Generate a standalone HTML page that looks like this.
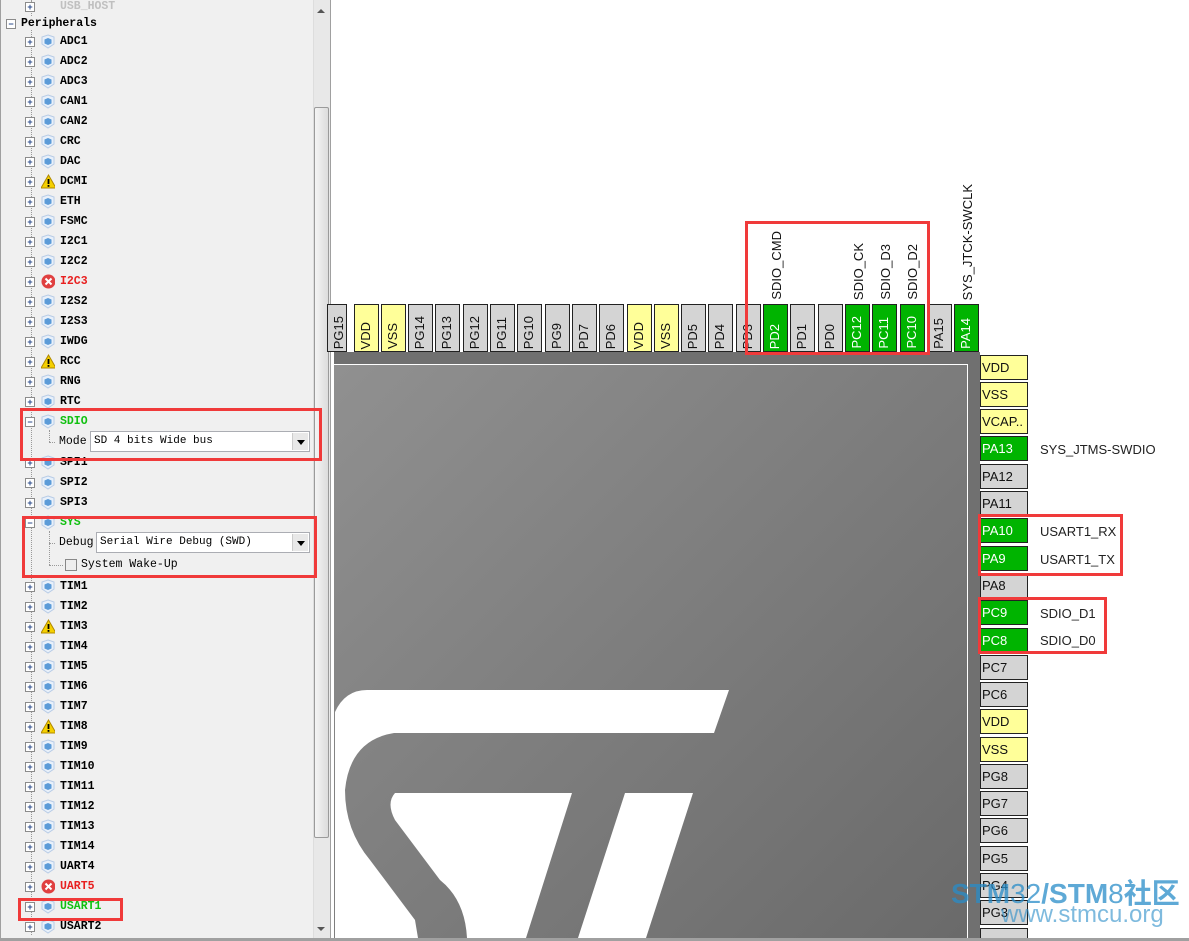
<!DOCTYPE html>
<html><head><meta charset="utf-8"><style>
*{margin:0;padding:0;box-sizing:border-box}
html,body{width:1189px;height:941px;overflow:hidden}
body{position:relative;background:#fff;font-family:"Liberation Sans",sans-serif}
#left{position:absolute;left:0;top:0;width:331px;height:941px;background:#f0f0f0;border-right:1px solid #a0a0a0;border-left:1px solid #a0a0a0}
.r{position:absolute;height:18px;font:bold 11.5px "Liberation Mono","Noto Sans CJK SC",monospace;line-height:18px;color:#000;white-space:nowrap}
.bx{position:absolute;width:10px;height:10px;border:1px solid #8b8b8b;background:#fff;font:bold 9px/8px "Liberation Sans",sans-serif;color:#2a4a8a;text-align:center}
.ic{position:absolute;width:14px;height:15px}
.vl{position:absolute;border-left:1px dotted #999;width:0}
.hl{position:absolute;border-top:1px dotted #999;height:0;width:6px}
.sel{position:absolute;height:21px;border:1px solid #abadb3;background:#fff;font:11px/19px "Liberation Mono",monospace;padding-left:3px;color:#000;white-space:nowrap}
.sel i{position:absolute;right:1px;top:1px;width:16px;height:17px;background:#e8e8e8;border-left:1px solid #ccc}
.sel i:after{content:"";position:absolute;left:4px;top:7px;border:4px solid transparent;border-top:5px solid #000}
.red{position:absolute;border:3px solid #f03a3a}
.tp{position:absolute;top:304px;width:25px;height:48px;border:1px solid #222;background:#d4d4d4;font-size:13px;color:#111}
.tp span{position:absolute;left:3px;bottom:2px;writing-mode:vertical-rl;transform:rotate(180deg)}
.rp{position:absolute;left:980px;width:48px;height:25px;border:1px solid #222;background:#d4d4d4;font-size:13px;line-height:23px;padding-left:1px;color:#111}
.y{background:#ffff99}.g{background:#00b400;color:#fff}
.lab{position:absolute;font-size:13px;color:#222}
.vt{position:absolute;writing-mode:vertical-rl;transform:rotate(180deg);font-size:13px;color:#111}
</style></head><body>
<div id="left">
<div class="vl" style="left:30px;top:0;height:16px"></div>
<div class="vl" style="left:30px;top:30px;height:905px"></div>
<div class="bx" style="left:24px;top:2px">+</div><div class="r" style="left:59px;top:-2px;color:#c0c0c0">USB_HOST</div>
<div class="bx" style="left:5px;top:19px">−</div><div class="r" style="left:20px;top:15px">Peripherals</div>

<svg width="0" height="0" style="position:absolute"><defs>
<g id="cube"><path d="M7 1 L13 3 L13 10 L7 14 L1 10 L1 3Z" fill="#e8f0fa" stroke="#b8cce6"/><path d="M7 4 L10.5 5.5 L10.5 9.5 L7 11 L3.5 9.5 L3.5 5.5Z" fill="#5b9bd8"/></g>
<g id="warn"><path d="M7.5 1 L15 14 L0 14Z" fill="#f5d000" stroke="#b08800"/><rect x="6.6" y="5" width="1.8" height="5" fill="#000"/><rect x="6.6" y="11" width="1.8" height="1.8" fill="#000"/></g>
<g id="err"><circle cx="7.5" cy="7.5" r="7" fill="#e04040"/><path d="M4.5 4.5 L10.5 10.5 M10.5 4.5 L4.5 10.5" stroke="#fff" stroke-width="2"/></g>
</defs></svg>

<div style="position:absolute;left:0;top:0">
<div class="bx" style="left:24px;top:37px">+</div><svg class="ic" style="left:40px;top:34px"><use href="#cube"/></svg><div class="r" style="left:59px;top:33px">ADC1</div>
<div class="bx" style="left:24px;top:57px">+</div><svg class="ic" style="left:40px;top:54px"><use href="#cube"/></svg><div class="r" style="left:59px;top:53px">ADC2</div>
<div class="bx" style="left:24px;top:77px">+</div><svg class="ic" style="left:40px;top:74px"><use href="#cube"/></svg><div class="r" style="left:59px;top:73px">ADC3</div>
<div class="bx" style="left:24px;top:97px">+</div><svg class="ic" style="left:40px;top:94px"><use href="#cube"/></svg><div class="r" style="left:59px;top:93px">CAN1</div>
<div class="bx" style="left:24px;top:117px">+</div><svg class="ic" style="left:40px;top:114px"><use href="#cube"/></svg><div class="r" style="left:59px;top:113px">CAN2</div>
<div class="bx" style="left:24px;top:137px">+</div><svg class="ic" style="left:40px;top:134px"><use href="#cube"/></svg><div class="r" style="left:59px;top:133px">CRC</div>
<div class="bx" style="left:24px;top:157px">+</div><svg class="ic" style="left:40px;top:154px"><use href="#cube"/></svg><div class="r" style="left:59px;top:153px">DAC</div>
<div class="bx" style="left:24px;top:177px">+</div><svg class="ic" style="left:40px;top:174px"><use href="#warn"/></svg><div class="r" style="left:59px;top:173px">DCMI</div>
<div class="bx" style="left:24px;top:197px">+</div><svg class="ic" style="left:40px;top:194px"><use href="#cube"/></svg><div class="r" style="left:59px;top:193px">ETH</div>
<div class="bx" style="left:24px;top:217px">+</div><svg class="ic" style="left:40px;top:214px"><use href="#cube"/></svg><div class="r" style="left:59px;top:213px">FSMC</div>
<div class="bx" style="left:24px;top:237px">+</div><svg class="ic" style="left:40px;top:234px"><use href="#cube"/></svg><div class="r" style="left:59px;top:233px">I2C1</div>
<div class="bx" style="left:24px;top:257px">+</div><svg class="ic" style="left:40px;top:254px"><use href="#cube"/></svg><div class="r" style="left:59px;top:253px">I2C2</div>
<div class="bx" style="left:24px;top:277px">+</div><svg class="ic" style="left:40px;top:274px"><use href="#err"/></svg><div class="r" style="left:59px;top:273px;color:#e82020">I2C3</div>
<div class="bx" style="left:24px;top:297px">+</div><svg class="ic" style="left:40px;top:294px"><use href="#cube"/></svg><div class="r" style="left:59px;top:293px">I2S2</div>
<div class="bx" style="left:24px;top:317px">+</div><svg class="ic" style="left:40px;top:314px"><use href="#cube"/></svg><div class="r" style="left:59px;top:313px">I2S3</div>
<div class="bx" style="left:24px;top:337px">+</div><svg class="ic" style="left:40px;top:334px"><use href="#cube"/></svg><div class="r" style="left:59px;top:333px">IWDG</div>
<div class="bx" style="left:24px;top:357px">+</div><svg class="ic" style="left:40px;top:354px"><use href="#warn"/></svg><div class="r" style="left:59px;top:353px">RCC</div>
<div class="bx" style="left:24px;top:377px">+</div><svg class="ic" style="left:40px;top:374px"><use href="#cube"/></svg><div class="r" style="left:59px;top:373px">RNG</div>
<div class="bx" style="left:24px;top:397px">+</div><svg class="ic" style="left:40px;top:394px"><use href="#cube"/></svg><div class="r" style="left:59px;top:393px">RTC</div>
<div class="bx" style="left:24px;top:417px">−</div><svg class="ic" style="left:40px;top:414px"><use href="#cube"/></svg><div class="r" style="left:59px;top:413px;color:#10c010">SDIO</div>
<div class="vl" style="left:48px;top:430px;height:12px"></div><div class="hl" style="left:48px;top:442px"></div>
<div class="r" style="left:58px;top:433px;font-weight:normal">Mode</div>
<div class="sel" style="left:89px;top:431px;width:220px">SD 4 bits Wide bus<i></i></div>
<div class="bx" style="left:24px;top:458px">+</div><svg class="ic" style="left:40px;top:455px"><use href="#cube"/></svg><div class="r" style="left:59px;top:454px">SPI1</div>
<div class="bx" style="left:24px;top:478px">+</div><svg class="ic" style="left:40px;top:475px"><use href="#cube"/></svg><div class="r" style="left:59px;top:474px">SPI2</div>
<div class="bx" style="left:24px;top:498px">+</div><svg class="ic" style="left:40px;top:495px"><use href="#cube"/></svg><div class="r" style="left:59px;top:494px">SPI3</div>
<div class="bx" style="left:24px;top:518px">−</div><svg class="ic" style="left:40px;top:515px"><use href="#cube"/></svg><div class="r" style="left:59px;top:514px;color:#10c010">SYS</div>
<div class="vl" style="left:48px;top:531px;height:34px"></div><div class="hl" style="left:48px;top:543px"></div><div class="hl" style="left:48px;top:565px;width:14px"></div>
<div class="r" style="left:58px;top:534px;font-weight:normal">Debug</div>
<div class="sel" style="left:95px;top:532px;width:214px">Serial Wire Debug (SWD)<i></i></div>
<div style="position:absolute;left:64px;top:559px;width:12px;height:12px;border:1px solid #888;background:#eee"></div>
<div class="r" style="left:80px;top:556px;font-weight:normal">System Wake-Up</div>
<div class="bx" style="left:24px;top:582px">+</div><svg class="ic" style="left:40px;top:579px"><use href="#cube"/></svg><div class="r" style="left:59px;top:578px">TIM1</div>
<div class="bx" style="left:24px;top:602px">+</div><svg class="ic" style="left:40px;top:599px"><use href="#cube"/></svg><div class="r" style="left:59px;top:598px">TIM2</div>
<div class="bx" style="left:24px;top:622px">+</div><svg class="ic" style="left:40px;top:619px"><use href="#warn"/></svg><div class="r" style="left:59px;top:618px">TIM3</div>
<div class="bx" style="left:24px;top:642px">+</div><svg class="ic" style="left:40px;top:639px"><use href="#cube"/></svg><div class="r" style="left:59px;top:638px">TIM4</div>
<div class="bx" style="left:24px;top:662px">+</div><svg class="ic" style="left:40px;top:659px"><use href="#cube"/></svg><div class="r" style="left:59px;top:658px">TIM5</div>
<div class="bx" style="left:24px;top:682px">+</div><svg class="ic" style="left:40px;top:679px"><use href="#cube"/></svg><div class="r" style="left:59px;top:678px">TIM6</div>
<div class="bx" style="left:24px;top:702px">+</div><svg class="ic" style="left:40px;top:699px"><use href="#cube"/></svg><div class="r" style="left:59px;top:698px">TIM7</div>
<div class="bx" style="left:24px;top:722px">+</div><svg class="ic" style="left:40px;top:719px"><use href="#warn"/></svg><div class="r" style="left:59px;top:718px">TIM8</div>
<div class="bx" style="left:24px;top:742px">+</div><svg class="ic" style="left:40px;top:739px"><use href="#cube"/></svg><div class="r" style="left:59px;top:738px">TIM9</div>
<div class="bx" style="left:24px;top:762px">+</div><svg class="ic" style="left:40px;top:759px"><use href="#cube"/></svg><div class="r" style="left:59px;top:758px">TIM10</div>
<div class="bx" style="left:24px;top:782px">+</div><svg class="ic" style="left:40px;top:779px"><use href="#cube"/></svg><div class="r" style="left:59px;top:778px">TIM11</div>
<div class="bx" style="left:24px;top:802px">+</div><svg class="ic" style="left:40px;top:799px"><use href="#cube"/></svg><div class="r" style="left:59px;top:798px">TIM12</div>
<div class="bx" style="left:24px;top:822px">+</div><svg class="ic" style="left:40px;top:819px"><use href="#cube"/></svg><div class="r" style="left:59px;top:818px">TIM13</div>
<div class="bx" style="left:24px;top:842px">+</div><svg class="ic" style="left:40px;top:839px"><use href="#cube"/></svg><div class="r" style="left:59px;top:838px">TIM14</div>
<div class="bx" style="left:24px;top:862px">+</div><svg class="ic" style="left:40px;top:859px"><use href="#cube"/></svg><div class="r" style="left:59px;top:858px">UART4</div>
<div class="bx" style="left:24px;top:882px">+</div><svg class="ic" style="left:40px;top:879px"><use href="#err"/></svg><div class="r" style="left:59px;top:878px;color:#e82020">UART5</div>
<div class="bx" style="left:24px;top:902px">+</div><svg class="ic" style="left:40px;top:899px"><use href="#cube"/></svg><div class="r" style="left:59px;top:898px;color:#10c010">USART1</div>
<div class="bx" style="left:24px;top:922px">+</div><svg class="ic" style="left:40px;top:919px"><use href="#cube"/></svg><div class="r" style="left:59px;top:918px">USART2</div>
</div>
<div style="position:absolute;left:312px;top:0;width:17px;height:938px;background:#e8e8e8;border-left:1px solid #ddd"></div>
<div style="position:absolute;left:316px;top:5px;border:4px solid transparent;border-bottom:4px solid #555"></div>
<div style="position:absolute;left:313px;top:107px;width:15px;height:731px;background:linear-gradient(90deg,#f4f4f4,#dcdcdc);border:1px solid #9a9a9a;border-radius:2px"></div>
<div style="position:absolute;left:316px;top:927px;border:4px solid transparent;border-top:4px solid #555"></div>
<div class="red" style="left:19px;top:408px;width:302px;height:53px"></div>
<div class="red" style="left:21px;top:516px;width:295px;height:62px"></div>
<div class="red" style="left:17px;top:898px;width:105px;height:23px"></div>
</div>

<div style="position:absolute;left:334px;top:352px;width:646px;height:586px;background:#707070"></div>
<div style="position:absolute;left:334px;top:364px;width:634px;height:574px;background:linear-gradient(135deg,#909090,#6a6a6a);border-top:1px solid #fff;border-right:1px solid #fff"></div>
<svg style="position:absolute;left:0;top:0" width="1189" height="938">
<path d="M335 712 Q345 690 367 690 L729 690 L714 733 L394 733 Q350 740 345 790 Q345 830 370 860 L415 920 L418 938 L335 938 Z" fill="#fff"/>
<path d="M395 793 L572 793 L526 938 L467 938 Q465 900 440 880 L395 820 Q386 803 395 793 Z" fill="#fff"/>
<path d="M625 793 L693 793 L646 938 L578 938 Z" fill="#fff"/>
</svg>

<div class="tp" style="left:327px;width:20px"><span>PG15</span></div>
<div class="tp y" style="left:354px"><span>VDD</span></div>
<div class="tp y" style="left:381px"><span>VSS</span></div>
<div class="tp" style="left:408px"><span>PG14</span></div>
<div class="tp" style="left:435px"><span>PG13</span></div>
<div class="tp" style="left:463px"><span>PG12</span></div>
<div class="tp" style="left:490px"><span>PG11</span></div>
<div class="tp" style="left:517px"><span>PG10</span></div>
<div class="tp" style="left:545px"><span>PG9</span></div>
<div class="tp" style="left:572px"><span>PD7</span></div>
<div class="tp" style="left:599px"><span>PD6</span></div>
<div class="tp y" style="left:627px"><span>VDD</span></div>
<div class="tp y" style="left:654px"><span>VSS</span></div>
<div class="tp" style="left:681px"><span>PD5</span></div>
<div class="tp" style="left:708px"><span>PD4</span></div>
<div class="tp" style="left:736px"><span>PD3</span></div>
<div class="tp g" style="left:763px"><span>PD2</span></div>
<div class="tp" style="left:790px"><span>PD1</span></div>
<div class="tp" style="left:818px"><span>PD0</span></div>
<div class="tp g" style="left:845px"><span>PC12</span></div>
<div class="tp g" style="left:872px"><span>PC11</span></div>
<div class="tp g" style="left:900px"><span>PC10</span></div>
<div class="tp" style="left:927px"><span>PA15</span></div>
<div class="tp g" style="left:954px"><span>PA14</span></div>
<div class="vt" style="left:769px;bottom:641px">SDIO_CMD</div>
<div class="vt" style="left:851px;bottom:641px">SDIO_CK</div>
<div class="vt" style="left:878px;bottom:641px">SDIO_D3</div>
<div class="vt" style="left:905px;bottom:641px">SDIO_D2</div>
<div class="vt" style="left:960px;bottom:641px">SYS_JTCK-SWCLK</div>
<div class="red" style="left:745px;top:221px;width:185px;height:134px"></div>

<div class="rp y" style="top:355px">VDD</div>
<div class="rp y" style="top:382px">VSS</div>
<div class="rp y" style="top:409px">VCAP..</div>
<div class="rp g" style="top:436px">PA13</div>
<div class="rp" style="top:464px">PA12</div>
<div class="rp" style="top:491px">PA11</div>
<div class="rp g" style="top:518px">PA10</div>
<div class="rp g" style="top:546px">PA9</div>
<div class="rp" style="top:573px">PA8</div>
<div class="rp g" style="top:600px">PC9</div>
<div class="rp g" style="top:628px">PC8</div>
<div class="rp" style="top:655px">PC7</div>
<div class="rp" style="top:682px">PC6</div>
<div class="rp y" style="top:709px">VDD</div>
<div class="rp y" style="top:737px">VSS</div>
<div class="rp" style="top:764px">PG8</div>
<div class="rp" style="top:791px">PG7</div>
<div class="rp" style="top:818px">PG6</div>
<div class="rp" style="top:846px">PG5</div>
<div class="rp" style="top:873px">PG4</div>
<div class="rp" style="top:900px">PG3</div>
<div class="rp" style="top:928px;height:10px;border-bottom:none"></div>
<div class="lab" style="left:1040px;top:442px">SYS_JTMS-SWDIO</div>
<div class="lab" style="left:1040px;top:524px">USART1_RX</div>
<div class="lab" style="left:1040px;top:552px">USART1_TX</div>
<div class="lab" style="left:1040px;top:606px">SDIO_D1</div>
<div class="lab" style="left:1040px;top:633px">SDIO_D0</div>
<div class="red" style="left:978px;top:514px;width:145px;height:62px"></div>
<div class="red" style="left:978px;top:597px;width:129px;height:57px"></div>

<div style="position:absolute;left:0;top:938px;width:1189px;height:3px;background:#a0a0a0"></div>

<div style="position:absolute;left:951px;top:879px;font:bold 28px/30px 'Liberation Sans','Noto Sans CJK SC',sans-serif;color:rgba(40,140,200,0.75);white-space:nowrap">STM<span style="font-weight:normal">32</span>/STM<span style="font-weight:normal">8</span>社区</div>
<div style="position:absolute;left:1001px;top:902px;font:24px/26px 'Liberation Sans',sans-serif;color:rgba(40,140,200,0.6);white-space:nowrap">www.stmcu.org</div>
</body></html>
